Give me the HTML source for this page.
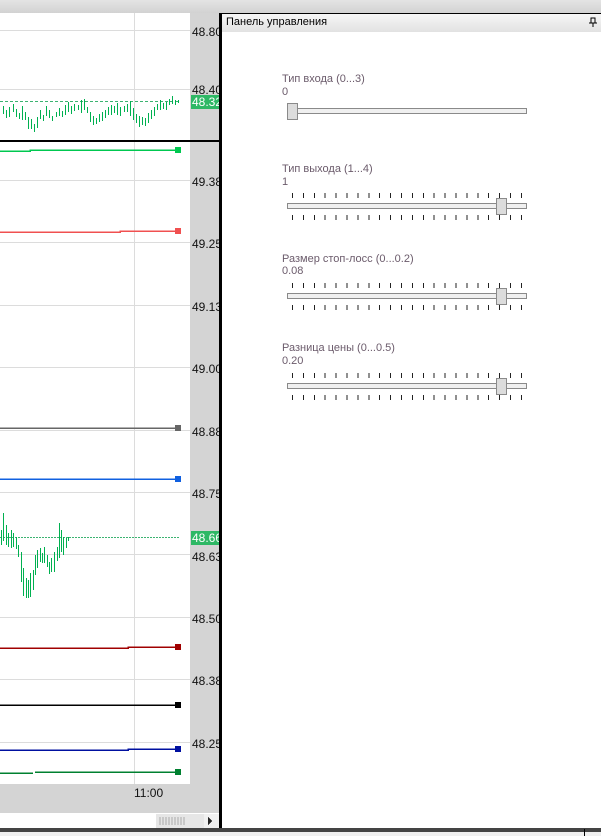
<!DOCTYPE html>
<html><head><meta charset="utf-8"><style>
*{margin:0;padding:0;box-sizing:border-box}
body{width:601px;height:836px;overflow:hidden;background:#fff;font-family:"Liberation Sans",sans-serif;position:relative}
.a{position:absolute}
.lbl{position:absolute;left:282px;font-size:11px;color:#6b5b6b;white-space:nowrap}
.track{position:absolute;left:287px;width:240px;height:6px;border:1px solid #8a8a8a;background:#f0f0f0}
.thumb{position:absolute;width:11px;height:17px;border:1px solid #8a8a8a;background:#dcdcdc}
.ticks{position:absolute;left:292px;width:232px;height:5px;background:repeating-linear-gradient(90deg,#222 0 1px,transparent 1px 10.9px)}
</style></head><body>
<div class="a" style="left:0;top:0;width:601px;height:13px;background:linear-gradient(#e4e4e4,#d2d2d2)"></div>
<svg class="a" style="left:0;top:13px" width="222" height="823" viewBox="0 13 222 823" shape-rendering="crispEdges">
<rect x="0" y="13" width="190" height="771" fill="#fff"/>
<rect x="190" y="13" width="30" height="800" fill="#d4d4d4"/>
<rect x="0" y="784" width="190" height="29" fill="#d4d4d4"/>
<g stroke="#dcdcdc" stroke-width="1">
<line x1="134.5" y1="13" x2="134.5" y2="784"/>
<line x1="0" y1="30.5" x2="190" y2="30.5"/>
<line x1="0" y1="89.5" x2="190" y2="89.5"/>
<line x1="0" y1="180.5" x2="190" y2="180.5"/>
<line x1="0" y1="242.5" x2="190" y2="242.5"/>
<line x1="0" y1="305.5" x2="190" y2="305.5"/>
<line x1="0" y1="367.5" x2="190" y2="367.5"/>
<line x1="0" y1="430.5" x2="190" y2="430.5"/>
<line x1="0" y1="492.5" x2="190" y2="492.5"/>
<line x1="0" y1="554.5" x2="190" y2="554.5"/>
<line x1="0" y1="617.5" x2="190" y2="617.5"/>
<line x1="0" y1="679.5" x2="190" y2="679.5"/>
<line x1="0" y1="742.5" x2="190" y2="742.5"/>
</g>
<line x1="0" y1="101.5" x2="180" y2="101.5" stroke="#3cb371" stroke-dasharray="3,2"/>
<g transform="translate(0.5,0)">
<path stroke="#00b050" stroke-width="1" fill="none" d="M3 106v8M6 110v8M9 107v10M13 104v8M16 109v8M19 113v6M22 106v14M25 112v8M28 117v12M31 119v10M34 124v8M37 117v11M40 110v9M43 115v6M46 106v10M49 110v8M52 116v5M56 112v5M59 108v8M62 111v6M65 105v10M68 102v10M71 106v8M74 104v7M78 105v5M81 100v13M84 99v11M87 107v6M90 112v10M93 116v9M96 118v6M99 114v8M102 112v9M105 110v8M108 107v8M111 105v10M114 106v7M117 103v12M120 107v9M124 106v6M127 104v8M130 101v15M133 108v12M136 114v9M139 116v11M142 117v8M145 118v8M148 113v10M151 110v9M154 107v9M157 104v6M160 100v10M163 103v6M166 102v8M169 99v6M172 96v8M175 100v5M178 100v3"/>
</g>
<rect x="0" y="140" width="219" height="2" fill="#000"/>
<g stroke-width="1.5" fill="none">
<path stroke="#00c850" d="M0 151h30v-1h150"/><rect x="175" y="147" width="6" height="6" fill="#00c850"/>
<path stroke="#f05050" d="M0 232h120v-1h60"/><rect x="175" y="228" width="6" height="6" fill="#f05050"/>
<path stroke="#666" d="M0 428h180"/><rect x="175" y="425" width="6" height="6" fill="#666"/>
<path stroke="#1060e0" d="M0 479h180"/><rect x="175" y="476" width="6" height="6" fill="#1060e0"/>
<path stroke="#a00000" d="M0 648h128v-1h52"/><rect x="175" y="644" width="6" height="6" fill="#a00000"/>
<path stroke="#000" d="M0 705h180"/><rect x="175" y="702" width="6" height="6" fill="#000"/>
<path stroke="#0010a0" d="M0 750h128v-1h52"/><rect x="175" y="746" width="6" height="6" fill="#0010a0"/>
<path stroke="#008030" d="M0 773h33m2 -1h145"/><rect x="175" y="769" width="6" height="6" fill="#008030"/>
</g>
<line x1="0" y1="537.5" x2="180" y2="537.5" stroke="#3cb371" stroke-dasharray="2,1"/>
<g transform="translate(0.5,0)">
<path stroke="#00b050" fill="none" d="M1 530v15M3 513v28M6 525v20M8 533v14M11 530v18M13 533v14M16 537v12M18 545v12M21 552v30M23 568v28M26 578v20M28 580v18M30 573v24M33 570v20M35 555v20M37 550v18M40 548v14M42 553v10M44 547v16M47 555v12M49 562v12M51 558v14M54 552v20M57 547v14M59 523v35M61 530v22M63 537v18M66 538v10M68 537v4"/>
</g>
<g font-size="12" fill="#111" font-family="Liberation Sans,sans-serif" shape-rendering="auto">
<text x="192" y="36">48.80</text><text x="192" y="94">48.40</text>
<rect x="191" y="95" width="29" height="14" fill="#2eb865"/><text x="192" y="106" fill="#fff">48.32</text>
<text x="192" y="186">49.38</text><text x="192" y="248">49.25</text><text x="192" y="311">49.13</text>
<text x="192" y="373">49.00</text><text x="192" y="436">48.88</text><text x="192" y="498">48.75</text>
<rect x="191" y="531" width="29" height="14" fill="#2eb865"/><text x="192" y="542" fill="#fff">48.66</text>
<text x="192" y="561">48.63</text><text x="192" y="623">48.50</text><text x="192" y="685">48.38</text>
<text x="192" y="748">48.25</text><text x="134" y="797">11:00</text>
</g>
<rect x="0" y="813" width="219" height="16" fill="#fff"/>
<rect x="156" y="814" width="48" height="14" fill="#e6e6e6"/>
<path stroke="#aaa" d="M160 817v8M163 817v8M166 817v8M169 817v8M172 817v8M175 817v8M178 817v8M181 817v8M184 817v8"/>
<rect x="204" y="814" width="15" height="14" fill="#f0f0f0"/><path d="M208 817l4 4-4 4z" fill="#222"/>
<rect x="219" y="13" width="3" height="816" fill="#000"/>
</svg>
<div class="a" style="left:0;top:828px;width:601px;height:4px;background:#444"></div>
<div class="a" style="left:0;top:832px;width:601px;height:4px;background:#f0f0f0"></div>
<div class="a" style="left:222px;top:13px;width:379px;height:1px;background:#000"></div>
<div class="a" style="left:222px;top:14px;width:379px;height:18px;background:linear-gradient(#f6f6f6,#e2e2e2);font-size:11px;color:#000;padding:2px 0 0 4px">Панель управления</div>
<svg class="a" style="left:589px;top:17px" width="8" height="10" shape-rendering="crispEdges"><path d="M2 1h4v5H2z M0 6h8" stroke="#000" fill="none"/><path d="M4 6v4" stroke="#000"/></svg>
<div class="a" style="left:222px;top:32px;width:379px;height:796px;background:#fff"></div>

<div class="lbl" style="top:73px">Тип входа (0...3)</div>
<div class="lbl" style="top:86px">0</div>
<div class="track" style="top:108px"></div>
<div class="thumb" style="left:287px;top:103px"></div>

<div class="lbl" style="top:163px">Тип выхода (1...4)</div>
<div class="lbl" style="top:176px">1</div>
<div class="ticks" style="top:193px"></div>
<div class="track" style="top:203px"></div>
<div class="ticks" style="top:215px"></div>
<div class="thumb" style="left:496px;top:198px"></div>

<div class="lbl" style="top:253px">Размер стоп-лосс (0...0.2)</div>
<div class="lbl" style="top:265px">0.08</div>
<div class="ticks" style="top:283px"></div>
<div class="track" style="top:293px"></div>
<div class="ticks" style="top:305px"></div>
<div class="thumb" style="left:496px;top:288px"></div>

<div class="lbl" style="top:342px">Разница цены (0...0.5)</div>
<div class="lbl" style="top:355px">0.20</div>
<div class="ticks" style="top:373px"></div>
<div class="track" style="top:383px"></div>
<div class="ticks" style="top:395px"></div>
<div class="thumb" style="left:496px;top:378px"></div>
<div class="a" style="left:584px;top:829px;width:1px;height:7px;background:#000"></div>
</body></html>
